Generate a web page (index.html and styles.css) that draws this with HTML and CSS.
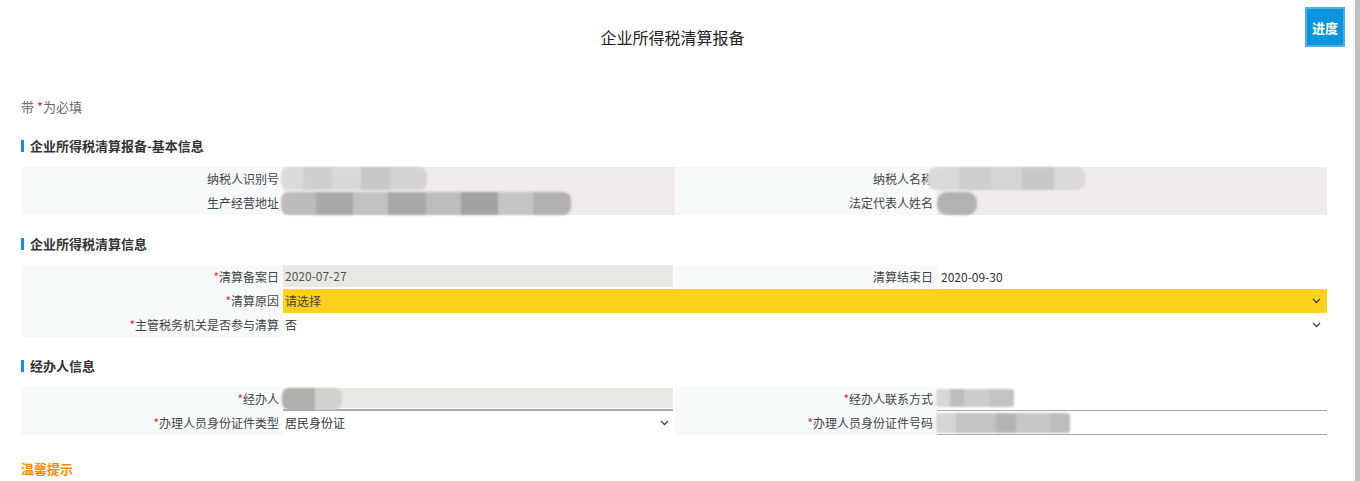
FILE: index.html
```html
<!DOCTYPE html>
<html lang="zh-CN">
<head>
    <meta charset="UTF-8">
    <title>企业所得税清算报备</title>
    <link rel="stylesheet" href="styles.css">
</head>
<body>
    <div class="page">
        <div class="page-head">
            <span></span>
            <h1>企业所得税清算报备</h1>
            <button class="progress-btn">进度</button>
        </div>

        <p class="note">带 <em>*</em>为必填</p>

        <h2 class="sec-title">企业所得税清算报备-基本信息</h2>
        <div class="form-grid">
            <div class="lbl">纳税人识别号</div>
            <div class="val val-pink"><span class="mosaic m-id"></span></div>
            <div class="lbl">纳税人名称</div>
            <div class="val val-pink"><span class="mosaic m-name"></span></div>
            <div class="lbl">生产经营地址</div>
            <div class="val val-pink"><span class="mosaic m-addr"></span></div>
            <div class="lbl">法定代表人姓名</div>
            <div class="val val-pink"><span class="mosaic m-legal"></span></div>
        </div>

        <h2 class="sec-title">企业所得税清算信息</h2>
        <div class="form-grid">
            <div class="lbl"><em>*</em>清算备案日</div>
            <div class="val val-gray">2020-07-27</div>
            <div class="lbl">清算结束日</div>
            <div class="val val-dark">2020-09-30</div>
            <div class="lbl"><em>*</em>清算原因</div>
            <div class="val val-wide val-yellow select">请选择
                <svg class="chev" width="9" height="6" viewBox="0 0 9 6"><polyline points="1,1 4.5,4.5 8,1" fill="none" stroke="#444" stroke-width="1.3"/></svg>
            </div>
            <div class="lbl"><em>*</em>主管税务机关是否参与清算</div>
            <div class="val val-wide select">否
                <svg class="chev" width="9" height="6" viewBox="0 0 9 6"><polyline points="1,1 4.5,4.5 8,1" fill="none" stroke="#444" stroke-width="1.3"/></svg>
            </div>
        </div>

        <h2 class="sec-title">经办人信息</h2>
        <div class="form-grid">
            <div class="lbl"><em>*</em>经办人</div>
            <div class="val val-gray line"><span class="mosaic m-agent"></span></div>
            <div class="lbl"><em>*</em>经办人联系方式</div>
            <div class="val line"><span class="mosaic m-phone"></span></div>
            <div class="lbl"><em>*</em>办理人员身份证件类型</div>
            <div class="val select">居民身份证
                <svg class="chev" width="9" height="6" viewBox="0 0 9 6"><polyline points="1,1 4.5,4.5 8,1" fill="none" stroke="#444" stroke-width="1.3"/></svg>
            </div>
            <div class="lbl"><em>*</em>办理人员身份证件号码</div>
            <div class="val line"><span class="mosaic m-idno"></span></div>
        </div>

        <h3 class="tips">温馨提示</h3>
    </div>
    <div class="scrollbar"></div>
</body>
</html>
```

FILE: styles.css
```css
body {
    margin: 0;
    font-family: "Noto Sans CJK SC", "Noto Sans", sans-serif;
    font-size: 12px;
    color: #333;
    background: #fff;
    overflow: hidden;
}

.page {
    width: 1350px;
    padding-left: 21px;
    box-sizing: border-box;
}

.page-head {
    display: grid;
    grid-template-columns: 1fr auto 1fr;
    align-items: start;
    height: 97px;
    margin-left: -21px;
    padding-right: 5px;
}

.page-head h1 {
    margin: 27px 0 0;
    font-size: 16px;
    font-weight: normal;
    line-height: 20px;
    color: #222;
}

.progress-btn {
    justify-self: end;
    margin-top: 7px;
    width: 40px;
    height: 40px;
    padding: 0;
    border: 2px solid #53acea;
    background: #0b95dc;
    color: #fff;
    font-family: inherit;
    font-size: 13px;
    font-weight: bold;
}

em {
    font-style: normal;
    color: #f22;
}

.note {
    margin: 0;
    line-height: 20px;
    font-size: 13px;
    color: #666;
}

.sec-title {
    margin: 23px 0 15px;
    padding-left: 6px;
    border-left: 3px solid #1a8cf0;
    font-size: 13px;
    line-height: 12px;
    height: 12px;
    color: #333;
}

.form-grid {
    display: grid;
    grid-template-columns: 262px 392px 262px 390px;
    grid-auto-rows: 24px;
    width: 1306px;
}

.lbl {
    background: #f7fafb;
    text-align: right;
    padding-right: 4px;
    line-height: 24px;
    color: #444;
    white-space: nowrap;
}

.val {
    position: relative;
    line-height: 24px;
    padding-left: 2px;
    color: #333;
    white-space: nowrap;
}

.val-pink {
    background: #efebec;
}

.val-gray {
    background: #e9e8e2;
    color: #555;
    margin: 0 2px 2px 0;
    line-height: 22px;
}

.val-dark {
    padding-left: 4px;
}

.val-wide {
    grid-column: span 3;
}

.val-yellow {
    background: #fed11c;
    color: #444;
}

.select {
    display: flex;
    align-items: center;
    justify-content: space-between;
    padding-right: 6px;
}

.chev {
    display: block;
}

.line {
    border-bottom: 1px solid #aaa;
    box-sizing: border-box;
}

.val-gray.line {
    margin: 0 2px 0 0;
    line-height: 22px;
    background: linear-gradient(#e9e8e2, #e9e8e2) 0 1px / 100% 20px no-repeat;
    border-bottom-width: 2px;
}

.mosaic {
    position: absolute;
    top: 0;
    left: -2px;
    height: 23px;
    border-radius: 8px;
    filter: blur(1px);
}

.m-id {
    width: 146px;
    background: linear-gradient(90deg, #dcdadb 0 15%, #d0cecf 15% 35%, #d9d7d8 35% 55%, #c9c7c8 55% 75%, #d4d2d3 75% 100%);
}

.m-name {
    left: -9px;
    width: 157px;
    background: linear-gradient(90deg, #dad8d9 0 20%, #cfcdce 20% 40%, #d5d3d4 40% 60%, #c8c6c7 60% 80%, #dbd9da 80% 100%);
}

.m-addr {
    top: 1px;
    width: 290px;
    background: linear-gradient(90deg, #bdbbbc 0 12%, #aaa8a9 12% 25%, #c2c0c1 25% 37%, #a9a7a8 37% 50%, #bebcbd 50% 62%, #a3a1a2 62% 75%, #c6c4c5 75% 87%, #b2b0b1 87% 100%);
}

.m-legal {
    top: 1px;
    left: 0;
    width: 40px;
    border-radius: 10px;
    background: #b3b1b2;
}

.m-agent {
    top: 1px;
    left: -1px;
    width: 60px;
    height: 22px;
    background: linear-gradient(90deg, #aeaeaa 0 55%, #d0d0cc 55% 100%);
}

.m-phone {
    top: 2px;
    left: -1px;
    width: 78px;
    height: 18px;
    border-radius: 3px;
    background: linear-gradient(90deg, #d7d7d7 0 18%, #bdbdbd 18% 36%, #cdcdcd 36% 68%, #c3c3c3 68% 100%);
}

.m-idno {
    top: 2px;
    left: -1px;
    width: 134px;
    height: 20px;
    border-radius: 3px;
    background: linear-gradient(90deg, #d4d4d4 0 15%, #c3c3c3 15% 45%, #b4b4b4 45% 60%, #c6c6c6 60% 85%, #bdbdbd 85% 100%);
}

.tips {
    margin: 24px 0 0;
    font-size: 13px;
    line-height: 20px;
    color: #ff8a00;
}

.scrollbar {
    position: fixed;
    top: 0;
    right: 0;
    width: 5px;
    height: 100%;
    background: #c1c1c1;
}
```
